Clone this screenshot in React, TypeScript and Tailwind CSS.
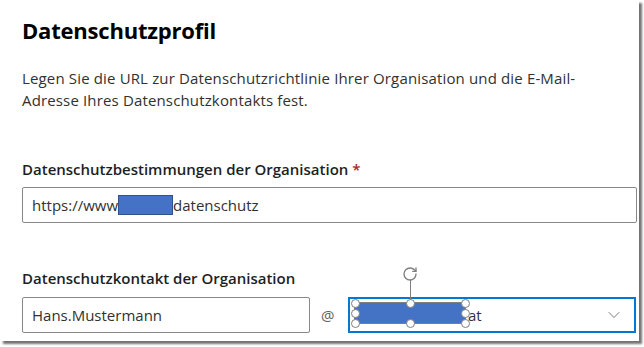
import React from 'react';
import { ChevronDown, RotateCw } from 'lucide-react';

const Handle: React.FC<{ className: string }> = ({ className }) => (
    <span className={`absolute w-[9px] h-[9px] -ml-[4.5px] -mt-[4.5px] rounded-full bg-white border border-[#7f7f7f] ${className}`}></span>
);

const App: React.FC = () => {
    return (
        <div className="w-[644px] h-[347px] bg-white" style={{ fontFamily: '"Open Sans", "Noto Sans", sans-serif' }}>
            <div className="w-[639px] h-[341px] bg-white shadow-[3px_3px_2px_rgba(0,0,0,0.55)] pl-[22px] pr-[3px] pt-[14px] flex flex-col">
                {/* Header */}
                <h1 className="text-[22px] leading-[32px] font-bold text-black tracking-[-0.2px]">Datenschutzprofil</h1>
                <p className="mt-[21px] text-[15px] leading-[22px] text-[#323130] tracking-[0.15px]">
                    Legen Sie die URL zur Datenschutzrichtlinie Ihrer Organisation und die E-Mail-
                    <br />
                    Adresse Ihres Datenschutzkontakts fest.
                </p>

                {/* Privacy statement URL */}
                <label className="mt-[48px] text-[15px] leading-[20px] font-semibold text-[#201f1e]">
                    Datenschutzbestimmungen der Organisation <span className="text-[#a4262c]">*</span>
                </label>
                <div className="mt-[8px] w-[615px] h-[36px] border border-[#8a8886] rounded-[2px] flex items-center px-[9px] text-[15px] text-[#323130]">
                    <span>https://www</span>
                    <span className="inline-block w-[55px] h-[20px] bg-[#4472c4] border border-[#2f528f]"></span>
                    <span>datenschutz</span>
                </div>

                {/* Privacy contact */}
                <label className="mt-[45px] text-[15px] leading-[20px] font-semibold text-[#201f1e]">
                    Datenschutzkontakt der Organisation
                </label>
                <div className="mt-[9px] flex items-center">
                    <div className="w-[288px] h-[36px] border border-[#8a8886] rounded-[2px] flex items-center px-[9px] text-[15px] text-[#323130]">
                        Hans.Mustermann
                    </div>
                    <span className="ml-[11px] w-[27px] text-[15px] text-[#605e5c]">@</span>
                    <div className="relative w-[288px] h-[36px] border-2 border-[#0078d4] flex items-center pl-[118px] pr-[10px] text-[15px] text-[#323130]">
                        <span className="flex-1">at</span>
                        <ChevronDown className="w-[20px] h-[20px] text-[#605e5c]" strokeWidth={1} />

                        {/* selected redaction shape */}
                        <div className="absolute left-[4px] top-[3px] w-[112px] h-[22px] bg-[#4472c4] border border-[#7f7f7f]">
                            <span className="absolute left-1/2 -top-[23px] w-px h-[23px] bg-[#7f7f7f]"></span>
                            <RotateCw className="absolute left-1/2 -top-[37px] -ml-[8px] w-[16px] h-[16px] text-[#7f7f7f]" strokeWidth={2} />
                            <Handle className="left-0 top-0" />
                            <Handle className="left-1/2 top-0" />
                            <Handle className="left-full top-0" />
                            <Handle className="left-0 top-1/2" />
                            <Handle className="left-full top-1/2" />
                            <Handle className="left-0 top-full" />
                            <Handle className="left-1/2 top-full" />
                            <Handle className="left-full top-full" />
                        </div>
                    </div>
                </div>
            </div>
        </div>
    );
};

export default App;
